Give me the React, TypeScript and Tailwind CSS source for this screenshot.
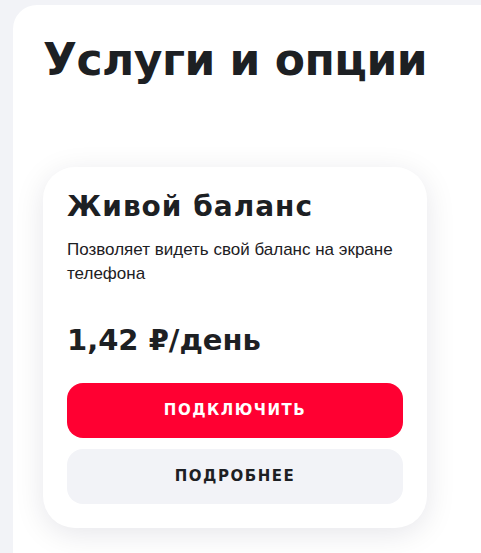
export default function App() {
  return (
    <div className="min-h-screen bg-[#f2f3f7] pl-[13px] pt-[5px] text-[#1d2023]">
      <div className="min-h-[548px] rounded-tl-[24px] bg-white pl-[30px] pt-[29px] pb-6">
        <h1 className="font-['DejaVu_Sans',sans-serif] text-[44px] font-bold leading-[52px] tracking-[-0.5px]">
          Услуги и опции
        </h1>
        <div className="mt-[81px] flex w-[384px] flex-col rounded-[32px] bg-white p-6 shadow-[0_6px_30px_rgba(0,0,50,0.1)]">
          <h3 className="font-['DejaVu_Sans',sans-serif] text-[28px] font-bold leading-[32px] tracking-[1px]">
            Живой баланс
          </h3>
          <p className="mt-[15px] font-['Liberation_Sans',sans-serif] text-[17px] leading-[24px]">
            Позволяет видеть свой баланс на экране телефона
          </p>
          <p className="mt-[36px] font-['DejaVu_Sans',sans-serif] text-[29px] font-bold leading-[36px]">
            1,42 ₽/день
          </p>
          <button
            type="button"
            className="mt-[25px] h-[55px] rounded-2xl bg-[#ff0032] font-['DejaVu_Sans',sans-serif] text-[15px] font-bold uppercase tracking-[1.5px] text-white"
          >
            Подключить
          </button>
          <button
            type="button"
            className="mt-[11px] h-[55px] rounded-2xl bg-[#f2f3f7] font-['DejaVu_Sans',sans-serif] text-[15px] font-bold uppercase tracking-[1.5px] text-[#1d2023]"
          >
            Подробнее
          </button>
        </div>
      </div>
    </div>
  );
}
